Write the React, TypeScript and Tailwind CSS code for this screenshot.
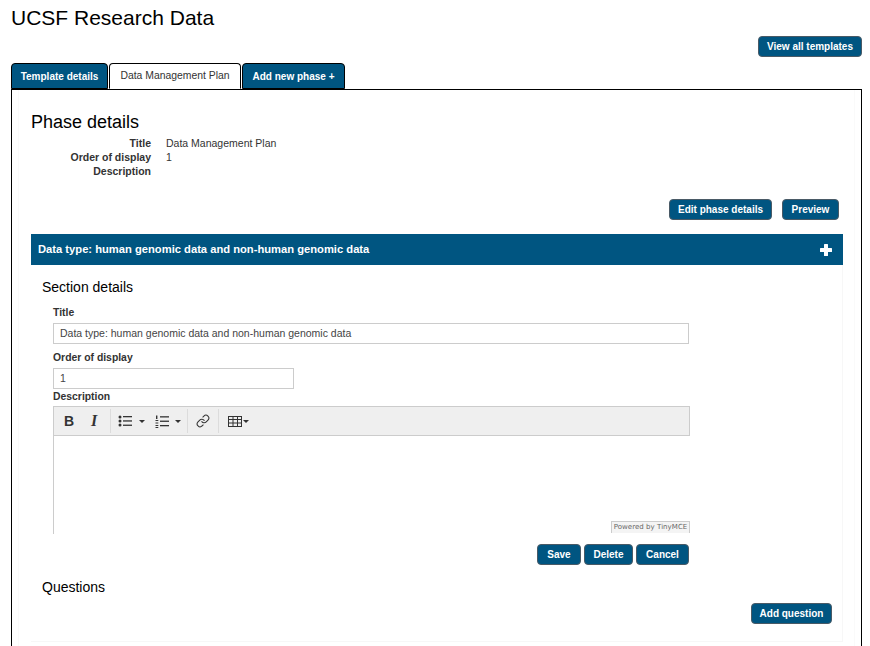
import { Link as LinkIcon } from "lucide-react";

const btn =
  "flex items-center justify-center h-[21px] rounded-[4px] border border-[#4a5a66] bg-[#005581] text-white text-[10px] font-bold";

const labelClass = "h-[14px] leading-[16px] text-[10.4px] font-bold text-[#333]";

function Tab({ label, active, className }: { label: string; active?: boolean; className: string }) {
  return (
    <div
      className={`h-[26px] flex items-center justify-center rounded-t-[4px] border border-black ${className} ${
        active ? "border-b-white bg-white text-[#333] text-[10.4px] -mb-px relative" : "bg-[#005581] text-white text-[10px] font-bold"
      }`}
    >
      {label}
    </div>
  );
}

function BulletList() {
  return (
    <svg width="14" height="12" viewBox="0 0 14 12" fill="#333">
      <circle cx="2" cy="2" r="1.5" />
      <circle cx="2" cy="6" r="1.5" />
      <circle cx="2" cy="10" r="1.5" />
      <rect x="5" y="1" width="9" height="1.3" />
      <rect x="5" y="5.3" width="9" height="1.3" />
      <rect x="5" y="9.6" width="9" height="1.3" />
    </svg>
  );
}

function NumberList() {
  return (
    <svg width="14" height="13" viewBox="0 0 14 13" fill="#333">
      <rect x="1" y="0.5" width="1.4" height="3.5" />
      <rect x="0.5" y="5" width="2.8" height="1" />
      <rect x="0.5" y="7.5" width="2.8" height="1" />
      <rect x="0.5" y="10" width="2.8" height="1" />
      <rect x="0.5" y="12" width="2.8" height="1" />
      <rect x="5" y="1.2" width="9" height="1.3" />
      <rect x="5" y="5.6" width="9" height="1.3" />
      <rect x="5" y="10" width="9" height="1.3" />
    </svg>
  );
}

function TableIcon() {
  return (
    <svg width="14" height="11" viewBox="0 0 14 11" fill="none" stroke="#333" strokeWidth="1">
      <rect x="0.5" y="0.5" width="13" height="10" />
      <path d="M0.5 3.5H13.5M0.5 7H13.5M5 0.5V10.5M9.5 0.5V10.5" />
    </svg>
  );
}

function Caret() {
  return <span className="block w-0 h-0 border-x-[3px] border-x-transparent border-t-[3px] border-t-[#333]" />;
}

function Divider({ className }: { className: string }) {
  return <span className={`block w-px h-[24px] bg-[#dcdcdc] ${className}`} />;
}

export default function App() {
  return (
    <div className="w-[870px] h-[646px] overflow-hidden bg-white font-['Liberation_Sans',Arial,sans-serif] text-black pl-[11px] pr-[8px]">
      <h1 className="text-[21px] leading-[24px] pt-[6px] h-[36px]">UCSF Research Data</h1>
      <div className="flex justify-end h-[27px]">
        <button className={`${btn} w-[104px]`}>View all templates</button>
      </div>
      <div className="flex gap-px">
        <Tab label="Template details" className="w-[97px]" />
        <Tab label="Data Management Plan" active className="w-[132px]" />
        <Tab label="Add new phase +" className="w-[103px]" />
      </div>
      <div className="border border-black h-[600px] px-[6px]">
        <div className="h-full border-x border-[#fafafa] pl-[12px] pr-[11px]">
          <h2 className="text-[18px] leading-[21px] pt-[22px] h-[46px]">Phase details</h2>
          <dl className="grid grid-cols-[120px_1fr] gap-x-[15px] text-[10.5px] leading-[14px] text-[#333]">
            <dt className="font-bold text-right">Title</dt>
            <dd>Data Management Plan</dd>
            <dt className="font-bold text-right">Order of display</dt>
            <dd>1</dd>
            <dt className="font-bold text-right">Description</dt>
            <dd />
          </dl>
          <div className="flex justify-end gap-[10px] pt-[21px] pr-[4px]">
            <button className={`${btn} w-[103px]`}>Edit phase details</button>
            <button className={`${btn} w-[57px]`}>Preview</button>
          </div>
          <div className="mt-[14px] h-[31px] bg-[#005581] text-white text-[11.2px] font-bold flex items-center justify-between pl-[7px] pr-[11px]">
            <span>Data type: human genomic data and non-human genomic data</span>
            <svg width="12" height="12" viewBox="0 0 12 12" fill="white">
              <rect x="4" y="0" width="4" height="12" rx="0.5" />
              <rect x="0" y="4" width="12" height="4" rx="0.5" />
            </svg>
          </div>
          <div className="pl-[11px] pr-[10px] border-r border-b border-[#f7f7f7] h-[377px]">
            <h3 className="text-[14px] leading-[16px] pt-[14px] h-[40px]">Section details</h3>
            <div className="pl-[11px]">
              <label className={`block ${labelClass}`}>Title</label>
              <div className="mt-[4px] w-[636px] h-[21px] border border-[#ccc] flex items-center pl-[6px] text-[10.5px] text-[#444]">
                Data type: human genomic data and non-human genomic data
              </div>
              <label className={`block mt-[6px] ${labelClass}`}>Order of display</label>
              <div className="mt-[4px] w-[241px] h-[21px] border border-[#ccc] flex items-center pl-[6px] text-[10.5px] text-[#444]">
                1
              </div>
              <label className={`block ${labelClass}`}>Description</label>
              <div className="w-[637px] mt-[3px]">
                <div className="h-[30px] border border-[#ccc] bg-[#efefef] flex items-center pl-[10px] text-[#333]">
                  <span className="w-[10px] text-[14px] font-bold leading-none">B</span>
                  <span className="w-[10px] ml-[17px] text-[16px] font-bold italic leading-none font-['Liberation_Serif',serif]">I</span>
                  <Divider className="ml-[9px]" />
                  <span className="ml-[7px] flex items-center gap-[7px]"><BulletList /><Caret /></span>
                  <span className="ml-[10px] flex items-center gap-[6px]"><NumberList /><Caret /></span>
                  <Divider className="ml-[6px]" />
                  <LinkIcon size={14} strokeWidth={1.8} className="ml-[8px] text-[#333]" />
                  <Divider className="ml-[8px]" />
                  <span className="ml-[9px] flex items-center gap-px"><TableIcon /><Caret /></span>
                </div>
                <div className="h-[98px] border-l border-[#ccc] flex flex-col justify-end items-end pb-px">
                  <span className="w-[79px] h-[12px] border border-b-0 border-[#ccc] bg-[#f4f4f4] text-[7px] leading-[11px] tracking-[0.05px] text-[#666] text-center whitespace-nowrap overflow-hidden font-['DejaVu_Sans',sans-serif]">
                    Powered by TinyMCE
                  </span>
                </div>
              </div>
              <div className="w-[636px] flex justify-end gap-[3px] mt-[10px]">
                <button className={`${btn} w-[44px]`}>Save</button>
                <button className={`${btn} w-[49px]`}>Delete</button>
                <button className={`${btn} w-[53px]`}>Cancel</button>
              </div>
            </div>
            <h3 className="text-[14px] leading-[16px] mt-[14px]">Questions</h3>
            <div className="flex justify-end mt-[8px]">
              <button className={`${btn} w-[81px]`}>Add question</button>
            </div>
          </div>
        </div>
      </div>
    </div>
  );
}
